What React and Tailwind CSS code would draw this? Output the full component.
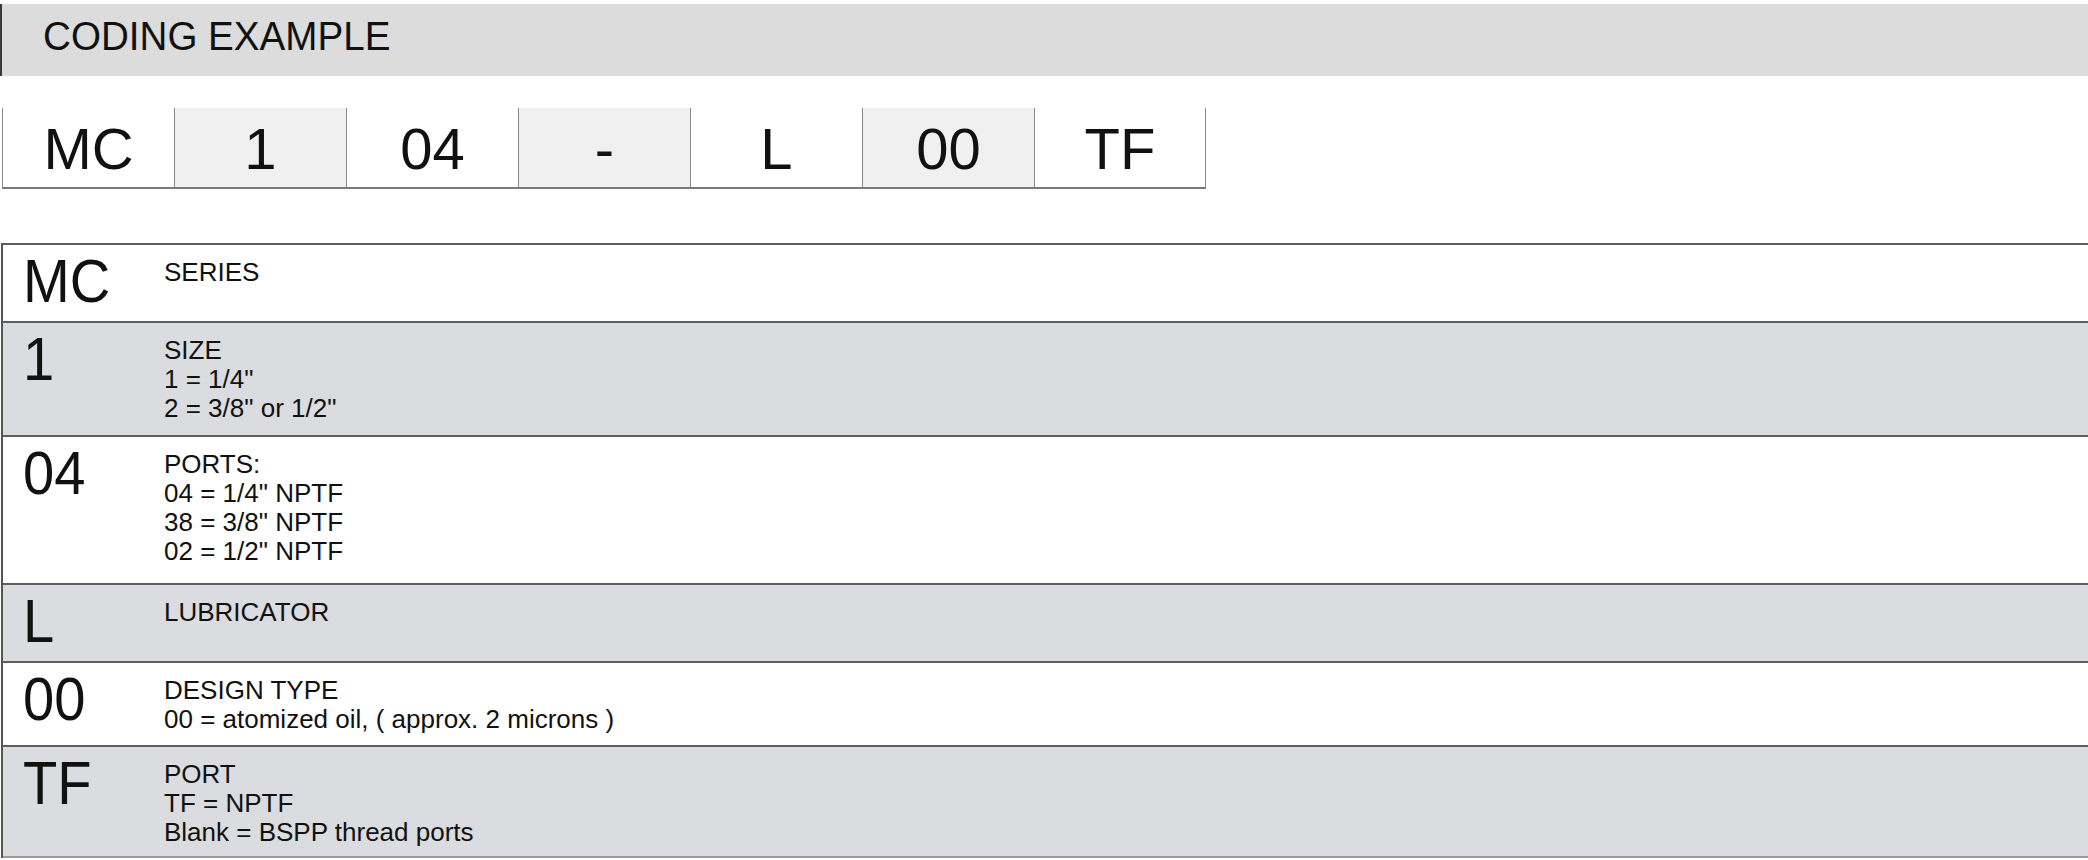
import React from "react";

const boxes = [
  { t: "MC", g: false },
  { t: "1", g: true },
  { t: "04", g: false },
  { t: "-", g: true },
  { t: "L", g: false },
  { t: "00", g: true },
  { t: "TF", g: false },
];

const rows = [
  { code: "MC", lines: ["SERIES"], g: false, h: "h-[78px]" },
  { code: "1", lines: ["SIZE", "1 = 1/4\"", "2 = 3/8\" or 1/2\""], g: true, h: "h-[114px]" },
  { code: "04", lines: ["PORTS:", "04 = 1/4\" NPTF", "38 = 3/8\" NPTF", "02 = 1/2\" NPTF"], g: false, h: "h-[148px]" },
  { code: "L", lines: ["LUBRICATOR"], g: true, h: "h-[78px]" },
  { code: "00", lines: ["DESIGN TYPE", "00 = atomized oil, ( approx. 2 microns )"], g: false, h: "h-[84px]" },
  { code: "TF", lines: ["PORT", "TF = NPTF", "Blank = BSPP thread ports"], g: true, h: "h-[113px]" },
];

export default function App() {
  return (
    <div className="w-[2088px] h-[860px] overflow-hidden bg-white text-[#111111] font-['Liberation_Sans',Arial,sans-serif]">
      <div className="pt-[4px]">
        <div className="h-[72px] bg-[#dcdcdc] border-l-2 border-[#3a3a3a] pl-[41px] pt-[12px]">
          <div className="text-[40px] leading-none scale-x-[0.965] origin-left">CODING EXAMPLE</div>
        </div>
      </div>

      <div className="mt-[32px] ml-[2px] flex w-fit border-b-2 border-[#7a7a7a]">
        {boxes.map((b, i) => (
          <div
            key={i}
            className={
              "w-[172px] h-[79px] border-l-[1.5px] border-[#8a8a8a] flex items-center justify-center pt-[3px] " +
              (b.g ? "bg-[#f0f0f0] " : "bg-white ") +
              (i === boxes.length - 1 ? "border-r-[1.5px]" : "")
            }
          >
            <span className="text-[58px] leading-none">{b.t}</span>
          </div>
        ))}
      </div>

      <div className="mt-[54px] ml-[1px] border-l-2 border-[#555555]">
        {rows.map((r, i) => (
          <div
            key={i}
            className={
              "flex border-t-2 border-[#5e5e5e] " +
              r.h +
              " " +
              (r.g ? "bg-[#dbdcdf] " : "bg-white ") +
              (i === rows.length - 1 ? "border-b-2 border-b-[#9a9a9a]" : "")
            }
          >
            <div className="w-[161px] shrink-0 pl-[20px] pt-[6px]">
              <div className="text-[61px] leading-none scale-x-[0.92] origin-left">{r.code}</div>
            </div>
            <div className="pt-[13px] text-[26px] leading-[29px]">
              {r.lines.map((l, j) => (
                <div key={j} className="whitespace-pre">{l}</div>
              ))}
            </div>
          </div>
        ))}
      </div>
    </div>
  );
}
